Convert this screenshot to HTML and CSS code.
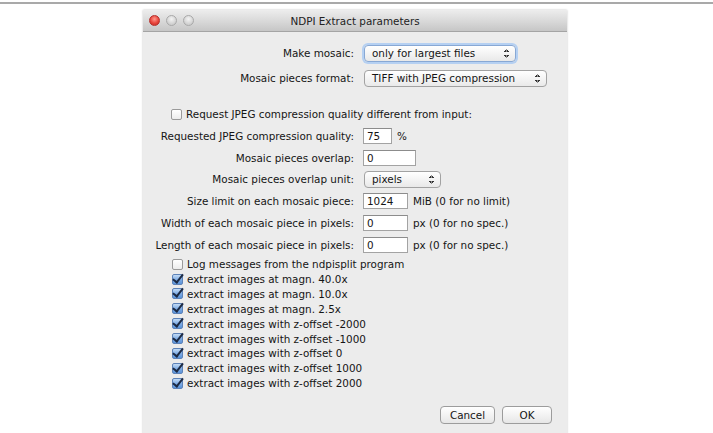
FILE: index.html
```html
<!DOCTYPE html>
<html lang="en">
<head>
    <meta charset="UTF-8">
    <meta name="viewport" content="width=device-width, initial-scale=1.0">
    <title>NDPI Extract parameters</title>
    <link rel="stylesheet" href="styles.css">
</head>
<body>
    <div class="rule"></div>
    <div class="window">
        <div class="titlebar">
            <div class="lights">
                <span class="light close"></span>
                <span class="light"></span>
                <span class="light"></span>
            </div>
            <div class="title">NDPI Extract parameters</div>
        </div>

        <div class="content">
            <div class="row first">
                <span class="label">Make mosaic:</span>
                <div class="popup focused w-mosaic"><span>only for largest files</span><i class="arrows"></i></div>
            </div>
            <div class="row second">
                <span class="label">Mosaic pieces format:</span>
                <div class="popup w-format"><span>TIFF with JPEG compression</span><i class="arrows"></i></div>
            </div>

            <div class="check lone"><span class="box"></span>Request JPEG compression quality different from input:</div>

            <div class="fields">
                <div class="row">
                    <span class="label">Requested JPEG compression quality:</span>
                    <div class="control"><span class="field w-small">75</span><span class="unit">%</span></div>
                </div>
                <div class="row">
                    <span class="label">Mosaic pieces overlap:</span>
                    <div class="control"><span class="field w-wide">0</span></div>
                </div>
                <div class="row">
                    <span class="label">Mosaic pieces overlap unit:</span>
                    <div class="popup w-unit"><span>pixels</span><i class="arrows"></i></div>
                </div>
                <div class="row">
                    <span class="label">Size limit on each mosaic piece:</span>
                    <div class="control"><span class="field">1024</span><span class="unit">MiB (0 for no limit)</span></div>
                </div>
                <div class="row">
                    <span class="label">Width of each mosaic piece in pixels:</span>
                    <div class="control"><span class="field">0</span><span class="unit">px (0 for no spec.)</span></div>
                </div>
                <div class="row">
                    <span class="label">Length of each mosaic piece in pixels:</span>
                    <div class="control"><span class="field">0</span><span class="unit">px (0 for no spec.)</span></div>
                </div>
            </div>

            <div class="checks">
                <div class="check"><span class="box"></span>Log messages from the ndpisplit program</div>
                <div class="check"><span class="box on"></span>extract images at magn. 40.0x</div>
                <div class="check"><span class="box on"></span>extract images at magn. 10.0x</div>
                <div class="check"><span class="box on"></span>extract images at magn. 2.5x</div>
                <div class="check"><span class="box on"></span>extract images with z-offset -2000</div>
                <div class="check"><span class="box on"></span>extract images with z-offset -1000</div>
                <div class="check"><span class="box on"></span>extract images with z-offset 0</div>
                <div class="check"><span class="box on"></span>extract images with z-offset 1000</div>
                <div class="check"><span class="box on"></span>extract images with z-offset 2000</div>
            </div>

            <div class="buttons">
                <button class="cancel">Cancel</button>
                <button class="ok">OK</button>
            </div>
        </div>
    </div>
</body>
</html>
```

FILE: styles.css
```css
html, body {
    margin: 0;
    padding: 0;
    height: 100%;
    overflow: hidden;
}
body {
    background-color: white;
    font-family: "DejaVu Sans", sans-serif;
    font-size: 10.4px;
    color: #151515;
}
.rule {
    height: 2px;
    margin-top: 2px;
    background-color: #a9a9a9;
}
.window {
    margin: 6px 0 0 143px;
    width: 424px;
    height: 440px;
    background-color: #ececec;
    box-shadow: 0 0 2px rgba(0, 0, 0, 0.25);
}
.titlebar {
    height: 21px;
    display: flex;
    align-items: center;
    position: relative;
    background: linear-gradient(#ededed, #d6d6d6 60%, #c6c6c6);
    border-bottom: 1px solid #a4a4a4;
}
.lights {
    display: flex;
    gap: 6px;
    padding-left: 6px;
}
.light {
    width: 11px;
    height: 11px;
    border-radius: 50%;
    box-sizing: border-box;
    border: 1px solid #a9a9a9;
    background: radial-gradient(circle at 50% 35%, #f4f4f4, #cfcfcf 70%);
}
.light.close {
    border-color: #b5302c;
    background: radial-gradient(circle at 50% 35%, #ff9a8e, #e8453c 55%, #c12a25);
}
.title {
    position: absolute;
    left: 0;
    right: 0;
    text-align: center;
    color: #222;
    pointer-events: none;
}
.content {
    padding-top: 10px;
}
.row {
    display: grid;
    grid-template-columns: 211px auto;
    column-gap: 9px;
    align-items: center;
    height: 22px;
}
.row.second {
    margin-top: 3px;
}
.fields {
    margin-top: 3px;
}
.fields .row {
    height: 21.8px;
}
.label {
    text-align: right;
    white-space: nowrap;
}
.control {
    display: flex;
    align-items: center;
}
.field {
    box-sizing: border-box;
    width: 45px;
    height: 16px;
    line-height: 14px;
    padding-left: 3px;
    background-color: white;
    border: 1px solid #a3a3a3;
    border-top-color: #8c8c8c;
}
.field.w-small {
    width: 29px;
}
.field.w-wide {
    width: 53px;
}
.unit {
    margin-left: 5px;
}
.popup {
    box-sizing: border-box;
    height: 17px;
    margin-left: 1px;
    display: flex;
    align-items: center;
    justify-content: space-between;
    padding: 0 6px 0 7px;
    border: 1px solid #a2a2a2;
    border-radius: 4px;
    background: linear-gradient(#ffffff, #f4f4f4 50%, #e9e9e9);
}
.popup.focused {
    border-color: #88a8d4;
    box-shadow: 0 0 0 2px #b5d0f2;
}
.w-mosaic {
    width: 152px;
}
.w-format {
    width: 183px;
}
.w-unit {
    width: 77px;
}
.arrows {
    width: 5px;
    height: 9px;
    background:
        linear-gradient(to bottom right, transparent 50%, #333 50%) 0 0 / 2.5px 3px no-repeat,
        linear-gradient(to bottom left, transparent 50%, #333 50%) 2.5px 0 / 2.5px 3px no-repeat,
        linear-gradient(to top right, transparent 50%, #333 50%) 0 6px / 2.5px 3px no-repeat,
        linear-gradient(to top left, transparent 50%, #333 50%) 2.5px 6px / 2.5px 3px no-repeat;
}
.check {
    display: flex;
    align-items: center;
    height: 14.9px;
    padding-left: 29px;
    white-space: nowrap;
}
.check.lone {
    margin-top: 18px;
    padding-left: 28px;
}
.box {
    box-sizing: border-box;
    width: 11px;
    height: 11px;
    margin-right: 4px;
    border: 1px solid #9a9a9a;
    border-radius: 2px;
    background: linear-gradient(#ffffff, #ececec);
    position: relative;
}
.box.on {
    border-color: #5d82b8;
    background: linear-gradient(#c4dcf6, #7aa9e3 55%, #5b93d9);
}
.box.on::after {
    content: "";
    position: absolute;
    left: 2px;
    top: -3px;
    width: 4px;
    height: 9px;
    border-right: 2px solid #1c2a44;
    border-bottom: 2px solid #1c2a44;
    transform: rotate(38deg);
}
.checks {
    margin-top: 1px;
}
.buttons {
    display: flex;
    justify-content: flex-end;
    gap: 7px;
    margin-top: 15px;
    padding-right: 15px;
}
.buttons button {
    box-sizing: border-box;
    height: 18px;
    padding: 0;
    font-family: "DejaVu Sans", sans-serif;
    font-size: 10.4px;
    color: #151515;
    border: 1px solid #9c9c9c;
    border-radius: 4px;
    background: linear-gradient(#ffffff, #f3f3f3 50%, #e6e6e6);
}
.buttons .cancel {
    width: 55px;
}
.buttons .ok {
    width: 50px;
}
```
